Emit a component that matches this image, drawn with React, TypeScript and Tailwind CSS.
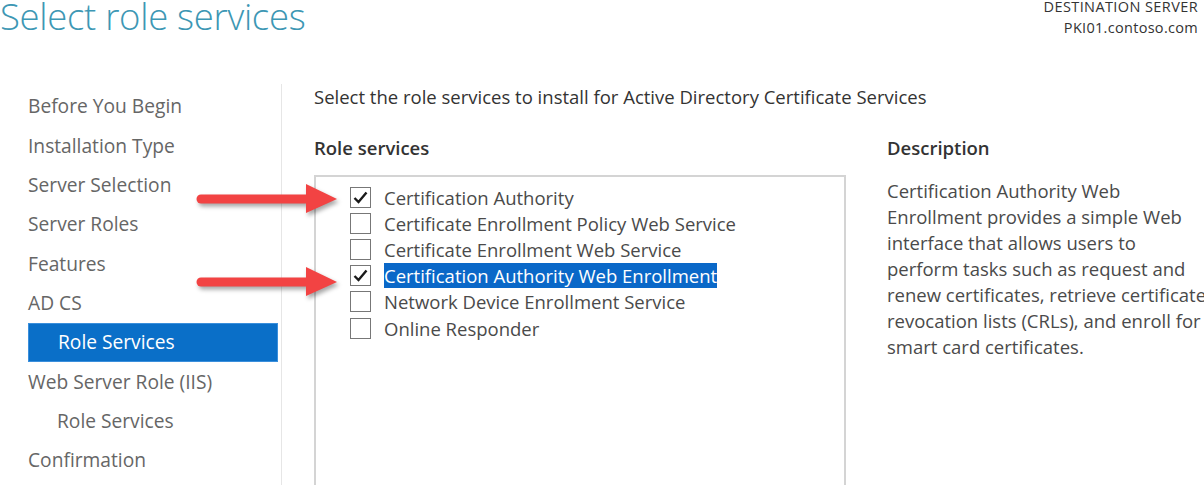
const navItems = [
  { label: 'Before You Begin', indent: false, active: false },
  { label: 'Installation Type', indent: false, active: false },
  { label: 'Server Selection', indent: false, active: false },
  { label: 'Server Roles', indent: false, active: false },
  { label: 'Features', indent: false, active: false },
  { label: 'AD CS', indent: false, active: false },
  { label: 'Role Services', indent: true, active: true },
  { label: 'Web Server Role (IIS)', indent: false, active: false },
  { label: 'Role Services', indent: true, active: false },
  { label: 'Confirmation', indent: false, active: false },
]

const services = [
  { label: 'Certification Authority', checked: true, selected: false },
  { label: 'Certificate Enrollment Policy Web Service', checked: false, selected: false },
  { label: 'Certificate Enrollment Web Service', checked: false, selected: false },
  { label: 'Certification Authority Web Enrollment', checked: true, selected: true },
  { label: 'Network Device Enrollment Service', checked: false, selected: false },
  { label: 'Online Responder', checked: false, selected: false },
]

function Checkbox({ checked }: { checked: boolean }) {
  return (
    <div className="w-[21px] h-[21px] border-[1.5px] border-[#777] bg-white flex items-center justify-center shrink-0">
      {checked && (
        <svg width="15" height="13" viewBox="0 0 15 13">
          <path d="M1.5 7 L5.5 11 L13.5 1.5" fill="none" stroke="#1a1a1a" strokeWidth="2.4" />
        </svg>
      )}
    </div>
  )
}

function Arrow({ top }: { top: number }) {
  return (
    <svg
      className="absolute left-[192px] drop-shadow-[2px_3px_2px_rgba(0,0,0,0.35)]"
      style={{ top }}
      width="150"
      height="36"
      viewBox="0 0 150 36"
    >
      <line x1="9" y1="17" x2="118" y2="17" stroke="#f24343" strokeWidth="9" strokeLinecap="round" />
      <polygon points="114,2 145,17 114,31" fill="#f24343" />
    </svg>
  )
}

export default function App() {
  return (
    <div className="relative w-[1204px] h-[485px] overflow-hidden bg-white font-['Open_Sans',sans-serif]">
      <div className="flex justify-between items-start h-[84px]">
        <h1 className="text-[#3d97b4] text-[36.5px] font-light leading-none -mt-[2px] tracking-[-0.3px] whitespace-nowrap">
          Select role services
        </h1>
        <div className="text-right text-[14.5px] leading-[21px] text-[#333] pr-[6px] -mt-[4px] whitespace-nowrap">
          <div className="tracking-[0.4px]">DESTINATION SERVER</div>
          <div className="tracking-[0.3px]">PKI01.contoso.com</div>
        </div>
      </div>

      <div className="flex h-[401px]">
        <nav className="w-[282px] border-r border-[#e6e6e6] pt-[3px] pl-[28px] pr-[3px] shrink-0">
          {navItems.map((item, i) => (
            <div
              key={i}
              className={`h-[39.33px] flex items-center text-[19.2px] whitespace-nowrap ${item.indent ? 'pl-[29px]' : ''} ${
                item.active ? 'bg-[#0a6fc8] text-white border border-[#3a8fdc]' : 'text-[#666]'
              }`}
            >
              {item.label}
            </div>
          ))}
        </nav>

        <main className="flex-1 pl-[32px] flex flex-col">
          <p className="text-[18.5px] text-[#333] leading-[26px] whitespace-nowrap">
            Select the role services to install for Active Directory Certificate Services
          </p>
          <div className="flex mt-[25px] flex-1">
            <div className="w-[532px] flex flex-col">
              <h2 className="text-[18.5px] font-semibold text-[#333] leading-[26px]">Role services</h2>
              <div className="mt-[14px] flex-1 border-2 border-b-0 border-[#d4d4d4] pt-[7px] pl-[34px]">
                {services.map((s, i) => (
                  <div key={i} className="h-[26.2px] flex items-center">
                    <Checkbox checked={s.checked} />
                    <span
                      className={`ml-[13px] text-[18.5px] leading-[25px] whitespace-nowrap ${
                        s.selected ? 'bg-[#0a68c8] text-white' : 'text-[#4a4a4a]'
                      }`}
                    >
                      {s.label}
                    </span>
                  </div>
                ))}
              </div>
            </div>
            <div className="ml-[41px] w-[330px] shrink-0">
              <h2 className="text-[18.5px] font-semibold text-[#333] leading-[26px]">Description</h2>
              <p className="mt-[17px] text-[18.5px] leading-[26px] text-[#4a4a4a] whitespace-nowrap">
                Certification Authority Web
                <br />
                Enrollment provides a simple Web
                <br />
                interface that allows users to
                <br />
                perform tasks such as request and
                <br />
                renew certificates, retrieve certificate
                <br />
                revocation lists (CRLs), and enroll for
                <br />
                smart card certificates.
              </p>
            </div>
          </div>
        </main>
      </div>

      <Arrow top={182} />
      <Arrow top={265} />
    </div>
  )
}
